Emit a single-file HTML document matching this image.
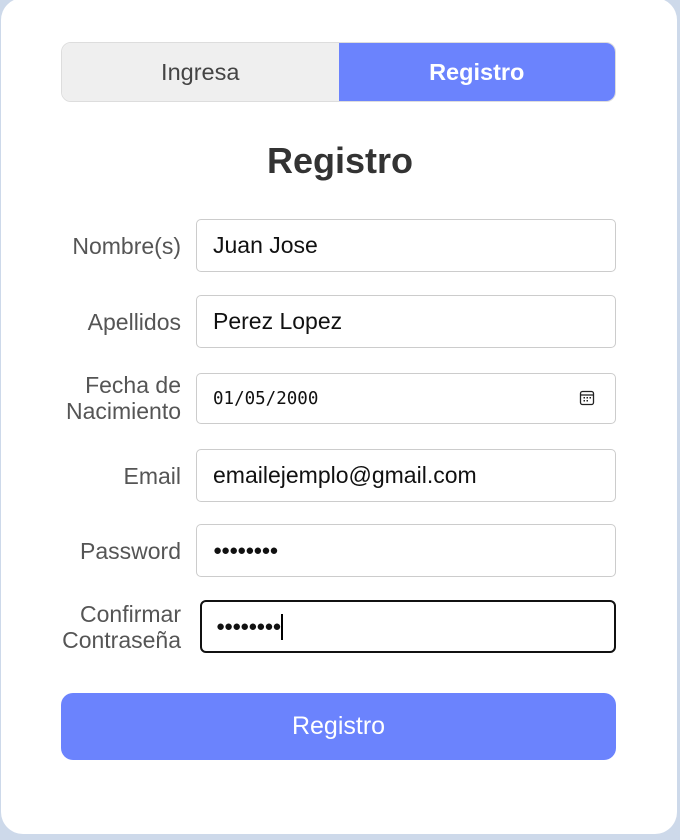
<!DOCTYPE html>
<html><head><meta charset="utf-8"><style>
*{box-sizing:border-box;margin:0;padding:0}
body{width:680px;height:840px;background:#cdd9ea;font-family:"Liberation Sans",Arial,sans-serif;position:relative;overflow:hidden}
.card{position:absolute;left:1px;top:-2px;width:676px;height:836px;background:#fff;border-radius:22px}
.tabs{position:absolute;left:61px;top:42px;width:555px;height:60px;border:1px solid #ddd;border-radius:10px;overflow:hidden;display:flex}
.tabs div{flex:1;display:flex;align-items:center;justify-content:center;font-size:23.5px}
.t1{background:#efefef;color:#444}
.t2{background:#6b83fd;color:#fff;font-weight:bold}
h1{position:absolute;left:0;width:680px;top:140px;text-align:center;font-size:36px;color:#333;font-weight:bold}
.lbl{position:absolute;right:499px;text-align:right;font-size:23px;color:#555;line-height:26px}
.inp{position:absolute;left:196px;width:420px;height:53px;border:1px solid #ccc;border-radius:5px;font-size:23px;color:#111;padding-left:16px;display:flex;align-items:center}
.btn{position:absolute;left:61px;top:693px;width:555px;height:67px;background:#6b83fd;border-radius:12px;color:#fff;font-size:25px;display:flex;align-items:center;justify-content:center}
.dots{font-size:15px;letter-spacing:-1px}
</style></head><body>
<div class="card"></div>
<div class="tabs"><div class="t1">Ingresa</div><div class="t2">Registro</div></div>
<h1>Registro</h1>
<div class="lbl" style="top:233px">Nombre(s)</div>
<div class="inp" style="top:219px">Juan Jose</div>
<div class="lbl" style="top:309px">Apellidos</div>
<div class="inp" style="top:295px">Perez Lopez</div>
<div class="lbl" style="top:372px">Fecha de<br>Nacimiento</div>
<div class="inp" style="top:373px;height:51px;font-family:'DejaVu Sans Mono','Liberation Mono',monospace;font-size:17.5px">01/05/2000
<svg style="position:absolute;left:382px;top:16px" width="16" height="16" viewBox="0 0 16 16"><rect x="1.5" y="1.5" width="13" height="13" rx="2" fill="none" stroke="#222" stroke-width="1.3"/><line x1="1.5" y1="5" x2="14.5" y2="5" stroke="#222" stroke-width="1.3"/><g fill="#222"><rect x="4.5" y="7" width="1.5" height="1.5"/><rect x="7.5" y="7" width="1.5" height="1.5"/><rect x="10.5" y="7" width="1.5" height="1.5"/><rect x="4.5" y="10" width="1.5" height="1.5"/><rect x="7.5" y="10" width="1.5" height="1.5"/></g></svg></div>
<div class="lbl" style="top:463px">Email</div>
<div class="inp" style="top:449px">emailejemplo@gmail.com</div>
<div class="lbl" style="top:538px">Password</div>
<div class="inp dots" style="top:524px">●●●●●●●●</div>
<div class="lbl" style="top:601px">Confirmar<br>Contraseña</div>
<div class="inp dots" style="top:600px;left:200px;width:416px;border:2px solid #111;border-radius:6px;padding-left:14px">●●●●●●●●<span style="display:inline-block;width:2px;height:26px;background:#000;margin-left:1px"></span></div>
<div class="btn">Registro</div>
</body></html>
